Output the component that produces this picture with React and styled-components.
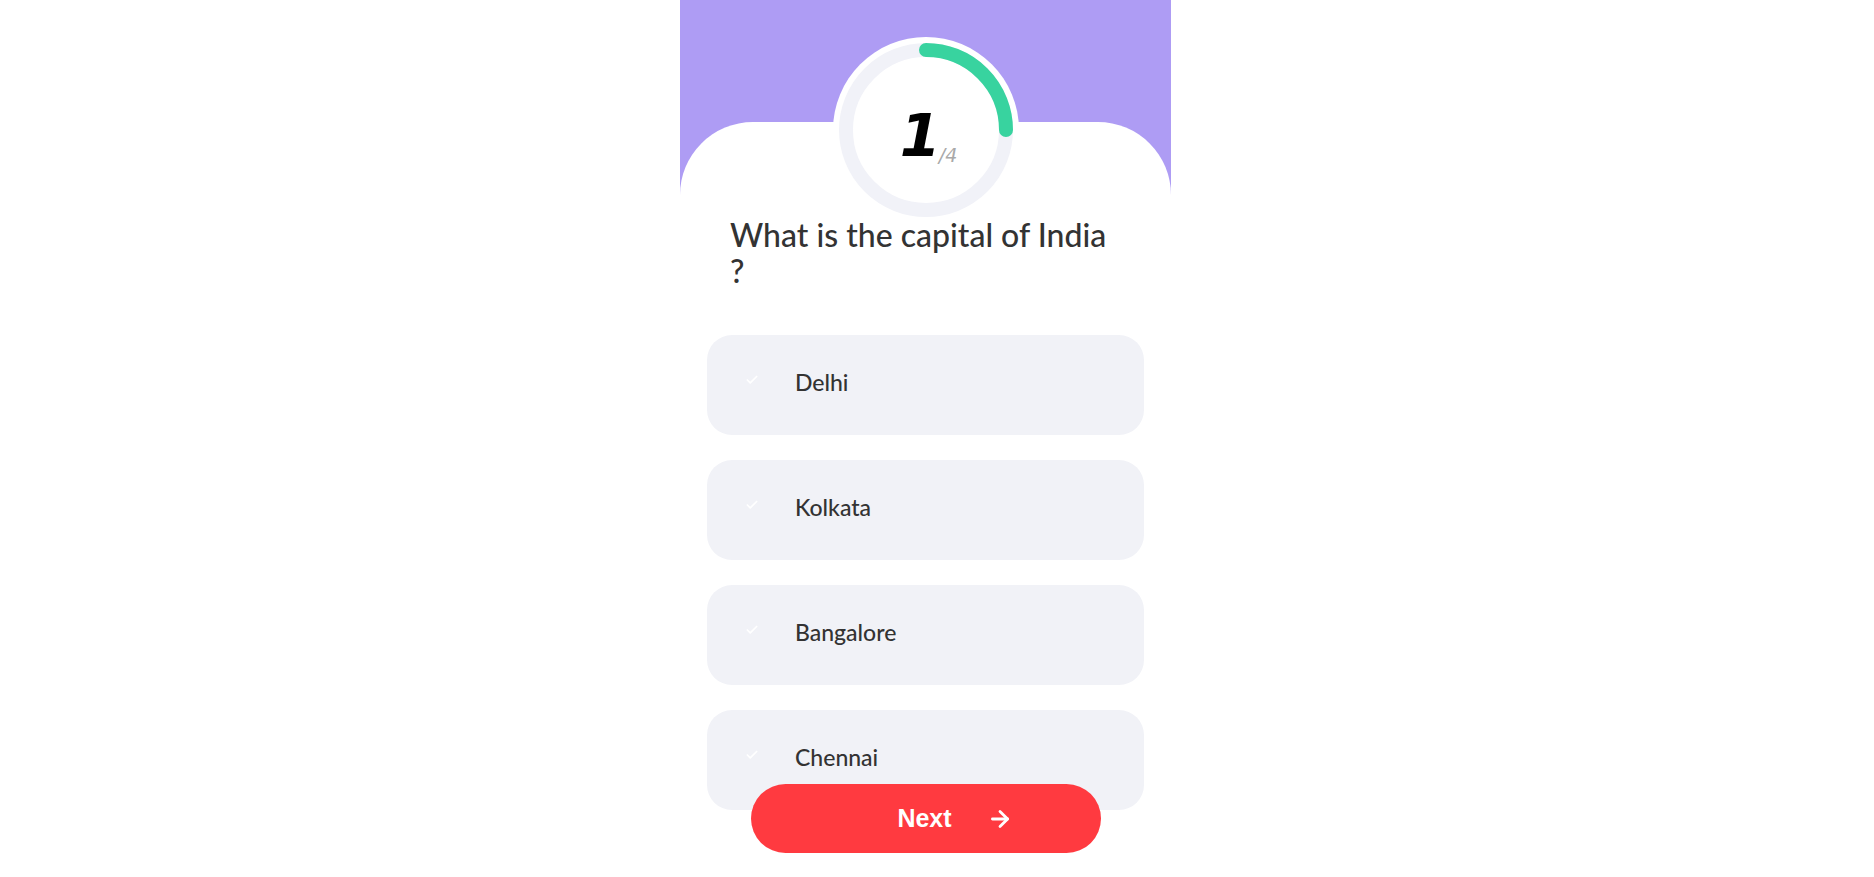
import React from "react";
import styled, { createGlobalStyle } from "styled-components";
import { FiArrowRight, FiCheck } from "react-icons/fi";

const GlobalStyle = createGlobalStyle`
  html, body {
    margin: 0;
    padding: 0;
    background: #ffffff;
    font-family: "Lato", "Noto Sans", sans-serif;
  }
`;

const Page = styled.div`
  width: 100%;
  min-height: 877px;
`;

const Card = styled.div`
  width: 491px;
  margin-left: 680px;
  display: flex;
  flex-direction: column;
  background: #ffffff;
`;

const Header = styled.div`
  height: 195px;
  background: #ae9cf4;
`;

const Body = styled.div`
  margin-top: -73px;
  background: #ffffff;
  border-radius: 73px 73px 0 0;
  display: flex;
  flex-direction: column;
  align-items: center;
  padding-bottom: 40px;
`;

const Ring = styled.div`
  position: relative;
  width: 186px;
  height: 186px;
  margin-top: -85px;
  display: flex;
  align-items: flex-end;
  justify-content: center;
  padding-left: 6px;
  box-sizing: border-box;
  padding-bottom: 58px;

  svg {
    position: absolute;
    inset: 0;
  }
`;

const Count = styled.span`
  position: relative;
  font-family: "DejaVu Sans", sans-serif;
  font-style: italic;
  font-weight: 700;
  font-size: 59px;
  line-height: 1;
  color: #000000;
`;

const Total = styled.span`
  position: relative;
  font-family: "DejaVu Sans", sans-serif;
  font-style: italic;
  font-size: 19px;
  line-height: 1;
  color: #a9a9a9;
  margin-left: -2px;
`;

const Question = styled.h2`
  align-self: flex-start;
  width: 385px;
  margin: -6px 0 0 50px;
  font-size: 32px;
  line-height: 36px;
  font-weight: 500;
  color: #333333;
`;

const Options = styled.div`
  width: 437px;
  display: flex;
  flex-direction: column;
  gap: 25px;
  margin-top: 46px;
`;

const Option = styled.button`
  height: 100px;
  border: none;
  border-radius: 25px;
  background: #f1f2f7;
  display: flex;
  align-items: center;
  padding: 0 0 6px 38px;
  font-family: inherit;
  font-size: 23px;
  font-weight: 500;
  color: #333333;
  text-align: left;
  cursor: pointer;
`;

const Tick = styled(FiCheck)`
  width: 14px;
  height: 14px;
  color: #ffffff;
  margin-right: 36px;
  margin-top: -4px;
`;

const NextButton = styled.button`
  position: fixed;
  bottom: 24px;
  left: 751px;
  width: 350px;
  height: 69px;
  border: none;
  border-radius: 35px;
  background: #ff3a40;
  color: #ffffff;
  display: flex;
  align-items: center;
  justify-content: center;
  gap: 35px;
  padding: 0 0 0 58px;
  font-family: "Liberation Sans", Arial, sans-serif;
  font-weight: 700;
  font-size: 25px;
  cursor: pointer;
`;

const options = ["Delhi", "Kolkata", "Bangalore", "Chennai"];

export default function App() {
  return (
    <Page>
      <GlobalStyle />
      <Card>
        <Header />
        <Body>
          <Ring>
            <svg width="186" height="186" viewBox="0 0 186 186">
              <circle cx="93" cy="93" r="93" fill="#ffffff" />
              <circle cx="93" cy="93" r="80" fill="none" stroke="#f1f2f8" strokeWidth="14" />
              <path
                d="M93 13 A80 80 0 0 1 173 93"
                fill="none"
                stroke="#38d39f"
                strokeWidth="14"
                strokeLinecap="round"
              />
            </svg>
            <Count>1</Count>
            <Total>/4</Total>
          </Ring>
          <Question>What is the capital of India ?</Question>
          <Options>
            {options.map((o) => (
              <Option key={o}>
                <Tick strokeWidth={3} />
                {o}
              </Option>
            ))}
          </Options>
        </Body>
      </Card>
      <NextButton>
        Next
        <FiArrowRight size={26} strokeWidth={2.6} />
      </NextButton>
    </Page>
  );
}
